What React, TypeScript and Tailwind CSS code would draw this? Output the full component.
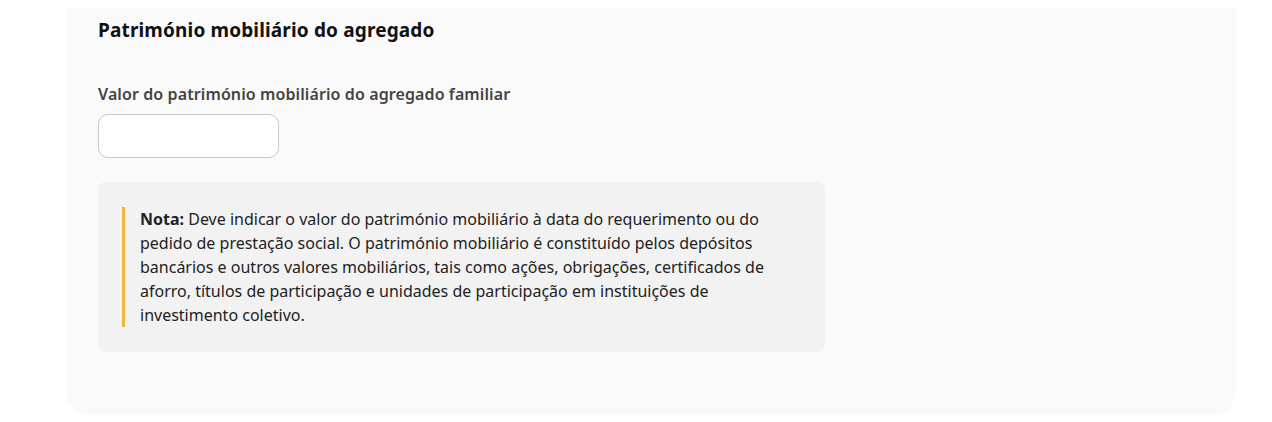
export default function App() {
  return (
    <div className="min-h-[422px] bg-white pt-2 pl-[66px] pr-[36px] font-['Noto_Sans',sans-serif]">
      <section className="h-[407px] rounded-b-3xl bg-[#fafafa] px-8 pt-[9px]">
        <h2 className="text-[19px] font-bold leading-[26px] tracking-[0.15px] text-[#111]">
          Património mobiliário do agregado
        </h2>

        <div className="mt-[41px]">
          <label className="block text-[16px] font-semibold leading-5 tracking-[0.1px] text-[#444]">
            Valor do património mobiliário do agregado familiar
          </label>
          <input
            type="text"
            className="mt-[10px] h-[44px] w-[181px] rounded-[10px] border border-[#c8c8c8] bg-white px-3 text-[15px] outline-none"
          />
        </div>

        <div className="mt-6 w-[727px] rounded-lg bg-[#f2f2f2] py-[25px] pl-6 pr-8">
          <div className="border-l-[3px] border-[#f0b640] pl-[15px] text-[16px] leading-6 text-[#222]">
            <p>
              <strong className="font-bold">Nota:</strong> Deve indicar o valor do património mobiliário à data do
              requerimento ou do pedido de prestação social. O património mobiliário é constituído pelos depósitos
              bancários e outros valores mobiliários, tais como ações, obrigações, certificados de aforro, títulos de
              participação e unidades de participação em instituições de investimento coletivo.
            </p>
          </div>
        </div>
      </section>
    </div>
  );
}
